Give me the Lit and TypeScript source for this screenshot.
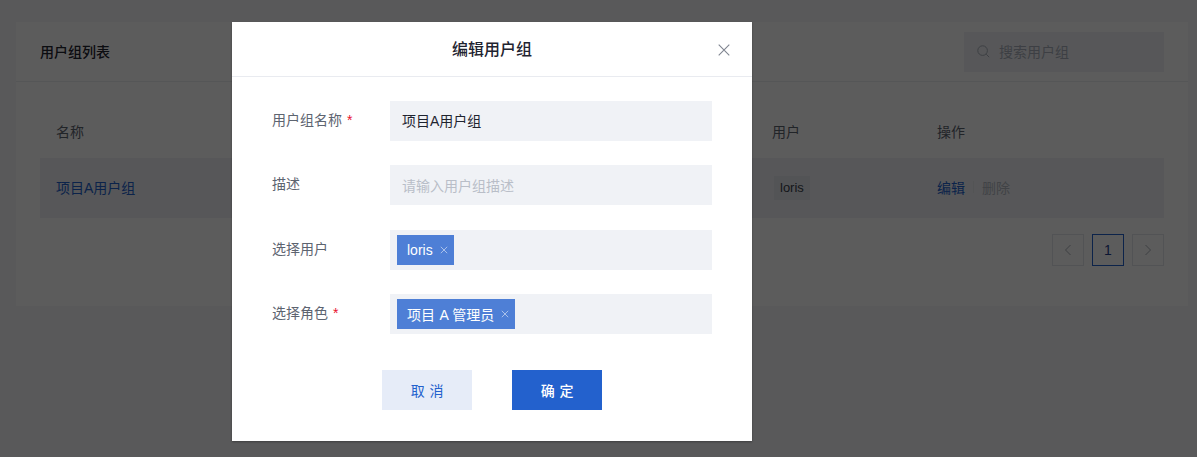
import { LitElement, html, css } from "lit";
import { customElement } from "lit/decorators.js";

@customElement("app-root")
export class AppRoot extends LitElement {
  static styles = css`
    :host {
      display: block;
      position: relative;
      width: 1197px;
      height: 457px;
      overflow: hidden;
      background: #f5f7fa;
      font-family: "Liberation Sans", "Noto Sans CJK SC", sans-serif;
      font-size: 14px;
      color: #1f2430;
    }
    .page { padding: 22px 9px 0 16px; }
    .card { background: #fff; height: 284px; box-sizing: border-box; }
    .card-head {
      height: 60px; box-sizing: border-box; border-bottom: 1px solid #eceef2;
      display: flex; align-items: center; justify-content: space-between;
      padding: 0 24px;
    }
    .card-title { font-weight: 500; color: #1f2430; padding-bottom: 2px; }
    .search {
      width: 200px; height: 40px; background: #f0f2f6; display: flex; align-items: center;
      gap: 9px; padding: 0 13px 1px; box-sizing: border-box; color: #aab0bc;
    }
    .search svg { width: 13px; height: 13px; flex: none; }
    .table { padding: 0 24px; }
    .thead, .trow { display: grid; grid-template-columns: 716px 165px 1fr; padding: 0 16px; align-items: center; }
    .thead { height: 76px; padding-top: 22px; box-sizing: border-box; color: #5d6470; }
    .trow { height: 60px; background: #f0f2f6; box-sizing: border-box; }
    .link { color: #2361cd; }
    .cell { padding-bottom: 3px; }
    .tag-cell { display: flex; align-items: center; }
    .tag { display: inline-block; margin-left: 2px; height: 24px; line-height: 23px; padding: 0 6px; background: #e6e9ef; font-size: 13px; color: #3a3f4a; }
    .ops { display: flex; align-items: center; gap: 8px; }
    .sep { width: 1px; height: 12px; background: #e6e8ec; }
    .muted { color: #b4b9c3; }
    .pager { display: flex; justify-content: flex-end; gap: 8px; padding-top: 16px; }
    .pg {
      width: 32px; height: 32px; box-sizing: border-box; border: 1px solid #e3e6eb;
      display: flex; align-items: center; justify-content: center; color: #1f2430; font-size: 14px;
    }
    .pg.on { border-color: #2361cd; color: #1f3f8f; }
    .pg svg { width: 8px; height: 12px; }
    .mask { position: absolute; inset: 0; background: rgba(0, 0, 0, 0.64); }
    .modal {
      position: absolute; left: 232px; top: 22px;
      width: 520px; height: 419px; background: #fff; box-shadow: 0 1px 2px rgba(0, 0, 0, 0.3);
    }
    .m-head {
      position: relative; height: 55px; box-sizing: border-box; border-bottom: 1px solid #e9ebf0;
      display: flex; align-items: center; justify-content: center;
      padding-bottom: 2px;
      font-size: 16px; font-weight: 500; color: #1f2430;
    }
    .close { position: absolute; right: 22px; top: 22px; width: 12px; height: 12px; }
    .form { padding: 24px 40px 0; display: flex; flex-direction: column; gap: 24px; }
    .field { display: grid; grid-template-columns: 118px 322px; height: 40px; }
    .field.nudge { margin-top: 1px; }
    .label { color: #5d6470; line-height: 39px; }
    .req { color: #e8112d; margin-left: 1px; }
    .control {
      background: #f0f2f6; height: 40px; box-sizing: border-box; display: flex; align-items: center;
      padding: 0 12px 2px;
    }
    .control.tags { padding: 0 7px; }
    .placeholder { color: #b9bec8; padding-bottom: 1px; }
    .chip {
      background: #4e7fd6; color: #fff; height: 30px; display: flex; align-items: center;
      padding: 0 6px 1px 10px; gap: 7px; font-size: 14px; box-sizing: border-box; word-spacing: 0.5px;
    }
    .chip svg { width: 8px; height: 8px; margin-top: 1px; }
    .actions { display: flex; justify-content: center; gap: 40px; margin-top: 36px; }
    .btn {
      width: 90px; height: 40px; display: flex; align-items: center; justify-content: center;
      font-size: 14px; letter-spacing: 4.7px; padding: 0 0 1px 5px; box-sizing: border-box;
    }
    .btn.ghost { background: #e6ecf8; color: #2361cd; }
    .btn.primary { background: #2361cd; color: #fff; font-weight: 500; }
  `;

  private x(color: string) {
    return html`<svg viewBox="0 0 8 8"><path d="M.8.8l6.4 6.4M7.2.8L.8 7.2" fill="none" stroke=${color} stroke-width="1"/></svg>`;
  }

  render() {
    return html`
      <div class="page">
        <div class="card">
          <div class="card-head">
            <span class="card-title">用户组列表</span>
            <div class="search">
              <svg viewBox="0 0 13 13"><circle cx="5.6" cy="5.6" r="4.8" fill="none" stroke="#a9afba" stroke-width="1"/><path d="M9.2 9.2l3 3" stroke="#a9afba" stroke-width="1"/></svg>
              <span>搜索用户组</span>
            </div>
          </div>
          <div class="table">
            <div class="thead"><span>名称</span><span>用户</span><span>操作</span></div>
            <div class="trow">
              <span class="link cell">项目A用户组</span>
              <span class="tag-cell"><span class="tag">loris</span></span>
              <span class="ops cell"><span class="link">编辑</span><span class="sep"></span><span class="muted">删除</span></span>
            </div>
            <div class="pager">
              <div class="pg"><svg viewBox="0 0 8 12"><path d="M6.5 1L1.5 6l5 5" fill="none" stroke="#a9afba"/></svg></div>
              <div class="pg on">1</div>
              <div class="pg"><svg viewBox="0 0 8 12"><path d="M1.5 1l5 5-5 5" fill="none" stroke="#a9afba"/></svg></div>
            </div>
          </div>
        </div>
      </div>
      <div class="mask"></div>
      <div class="modal">
        <div class="m-head">
          编辑用户组
          <svg class="close" viewBox="0 0 12 12"><path d="M.7.7l10.6 10.6M11.3.7L.7 11.3" fill="none" stroke="#7f8590" stroke-width="1.1"/></svg>
        </div>
        <div class="form">
          <div class="field"><span class="label">用户组名称 <span class="req">*</span></span><div class="control">项目A用户组</div></div>
          <div class="field"><span class="label">描述</span><div class="control placeholder">请输入用户组描述</div></div>
          <div class="field nudge"><span class="label">选择用户</span><div class="control tags"><div class="chip">loris ${this.x("#a9c1ea")}</div></div></div>
          <div class="field"><span class="label">选择角色 <span class="req">*</span></span><div class="control tags"><div class="chip">项目 A 管理员 ${this.x("#a9c1ea")}</div></div></div>
        </div>
        <div class="actions">
          <div class="btn ghost">取消</div>
          <div class="btn primary">确定</div>
        </div>
      </div>
    `;
  }
}
